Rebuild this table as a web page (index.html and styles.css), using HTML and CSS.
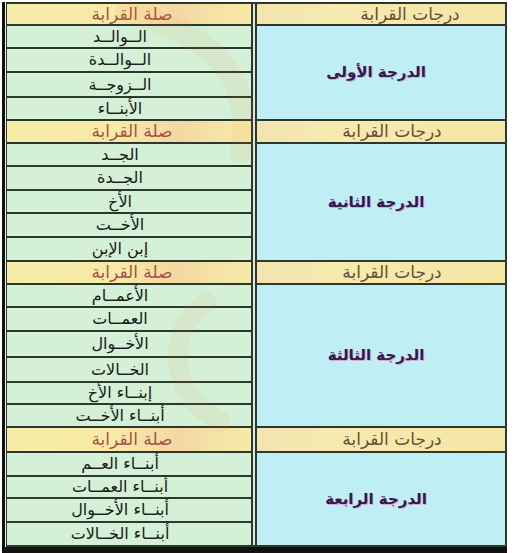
FILE: index.html
```html
<!DOCTYPE html>
<html lang="ar">
<head>
<meta charset="utf-8">
<title>درجات القرابة</title>
<link rel="stylesheet" href="styles.css">
</head>
<body>
<div class="page">
  <div class="frame">
    <div class="sheet">
      <div class="divider"></div>

      <div class="cell head rel-head">صلة القرابة</div>
      <div class="cell head deg-head first">درجات القرابة</div>
      <div class="cell rel">الــوالــد</div>
      <div class="cell deg span4"><span class="label">الدرجة الأولى</span></div>
      <div class="cell rel">الــوالــدة</div>
      <div class="cell rel">الــزوجــة</div>
      <div class="cell rel">الأبنــاء</div>

      <div class="cell head rel-head">صلة القرابة</div>
      <div class="cell head deg-head">درجات القرابة</div>
      <div class="cell rel">الجــد</div>
      <div class="cell deg span5"><span class="label">الدرجة الثانية</span></div>
      <div class="cell rel">الجــدة</div>
      <div class="cell rel">الأخ</div>
      <div class="cell rel">الأخــت</div>
      <div class="cell rel">إبن الإبن</div>

      <div class="cell head rel-head">صلة القرابة</div>
      <div class="cell head deg-head">درجات القرابة</div>
      <div class="cell rel">الأعمــام</div>
      <div class="cell deg span6"><span class="label">الدرجة الثالثة</span></div>
      <div class="cell rel">العمــات</div>
      <div class="cell rel">الأخــوال</div>
      <div class="cell rel">الخــالات</div>
      <div class="cell rel">إبنــاء الأخ</div>
      <div class="cell rel">أبنــاء الأخــت</div>

      <div class="cell head rel-head">صلة القرابة</div>
      <div class="cell head deg-head">درجات القرابة</div>
      <div class="cell rel">أبنــاء العــم</div>
      <div class="cell deg span4"><span class="label">الدرجة الرابعة</span></div>
      <div class="cell rel">أبنــاء العمــات</div>
      <div class="cell rel">أبنــاء الأخــوال</div>
      <div class="cell rel">أبنــاء الخــالات</div>

      <svg class="watermark" viewBox="0 0 501 545" width="501" height="545" aria-hidden="true">
        <path d="M120 10 C 200 30, 250 70, 235 150" fill="none" stroke="#f08a3a" stroke-width="22" stroke-linecap="round"/>
        <path d="M200 300 C 160 330, 160 390, 215 420" fill="none" stroke="#f08a3a" stroke-width="20" stroke-linecap="round"/>
      </svg>
    </div>
  </div>
</div>
</body>
</html>
```
FILE: styles.css
```css
html, body {
  margin: 0;
  padding: 0;
  background: #ffffff;
}

.page {
  padding: 2px 8px 0 2px;
}

.frame {
  width: 501px;
  border-left: 3px solid #111111;
  border-bottom: 6px solid #111111;
  padding-left: 1px;
  background: #eef2ee;
}

.sheet {
  position: relative;
  display: grid;
  direction: ltr;
  grid-template-columns: 244px 2px 248px;
  grid-template-rows: 20px 21px 22px 23px 21px 21px 21px 22px 21px 22px 22px 21px 21px 22px 24px 23px 20px 21px 23px 22px 20px 22px 22px;
  column-gap: 2px;
  row-gap: 2px;
  padding: 2px 2px 2px 1px;
  background: #2c372d;
  font-family: "DejaVu Sans", "Noto Sans", sans-serif;
}

.divider {
  grid-column: 2;
  grid-row: 1 / -1;
  background: #dfeadc;
}

.cell {
  display: flex;
  align-items: center;
  justify-content: center;
  direction: rtl;
  white-space: nowrap;
  overflow: hidden;
  line-height: 1.1;
}

.head {
  font-size: 17px;
}

.rel-head {
  grid-column: 1;
  color: #a5524a;
  padding-left: 6px;
  background: linear-gradient(90deg, #f6eca8 0%, #f7eaa6 45%, #f4d7a2 70%, #f5e2a6 85%, #f6eaa8 100%);
}

.deg-head {
  grid-column: 3;
  color: #6a4c3a;
  padding-left: 22px;
  background: linear-gradient(90deg, #f3e4b0 0%, #f6eaae 30%, #f4e6a4 100%);
}

.deg-head.first {
  padding-left: 58px;
}

.rel {
  grid-column: 1;
  font-size: 16px;
  color: #1a1a1a;
  padding-right: 18px;
  background: #d4f0d6;
}

.deg {
  grid-column: 3;
  background: #bfeef4;
}

.span4 { grid-row: span 4; }
.span5 { grid-row: span 5; }
.span6 { grid-row: span 6; }

.label {
  font-size: 15px;
  font-weight: bold;
  color: #2b1c4f;
  margin-right: 10px;
  text-shadow: 1px 1px 0 #d5a8cc, 0 0 1px #e6c0dc;
}

.watermark {
  position: absolute;
  left: 0;
  top: 0;
  pointer-events: none;
  opacity: 0.07;
}
```
